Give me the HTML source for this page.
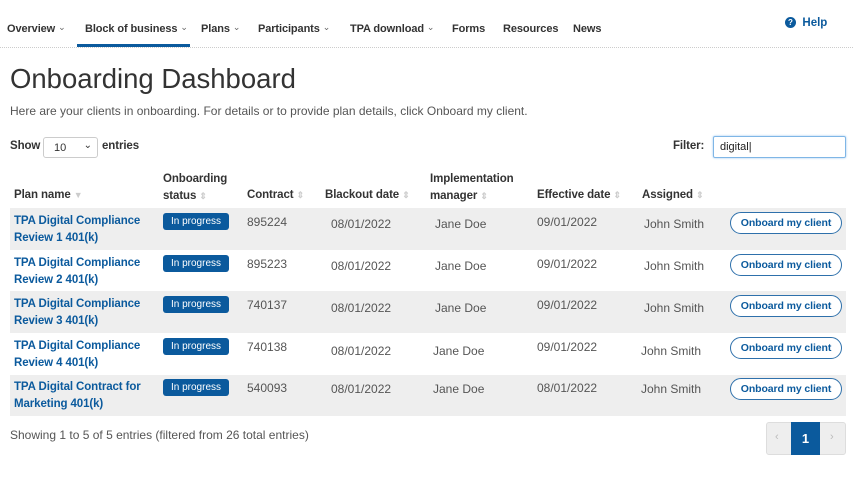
<!DOCTYPE html>
<html><head><meta charset="utf-8"><style>
*{margin:0;padding:0;box-sizing:border-box}
body{width:853px;height:480px;background:#fff;font-family:"Liberation Sans",sans-serif;color:#333;position:relative;overflow:hidden}
.a{position:absolute;white-space:nowrap}
.nav{font-size:11px;font-weight:bold;color:#333;top:23px;letter-spacing:-0.1px}
.car{font-weight:normal;font-size:9px;color:#666;position:relative;top:-2px}
.th{font-size:11.5px;font-weight:bold;color:#333;letter-spacing:-0.1px}
.s{color:#ccc;font-size:9px}
.row{position:absolute;left:10px;width:836px}
.g{background:#eee}
.pn{font-size:11.5px;font-weight:bold;color:#0b5a9d;line-height:17px;letter-spacing:-0.1px}
.badge{background:#0b5a9d;color:#fff;font-size:10px;border-radius:3px;width:66px;height:17px;line-height:17px;text-align:center}
.c{font-size:12px;color:#555}
.btn{border:1px solid #2e70ab;border-radius:12px;width:112px;height:22px;line-height:20px;text-align:center;color:#0b5a9d;font-size:10.5px;font-weight:bold;background:#fff;letter-spacing:-0.1px}
</style></head><body>
<div class="a nav" style="left:7px">Overview <span class="car">&#8964;</span></div>
<div class="a nav" style="left:85px">Block of business <span class="car">&#8964;</span></div>
<div style="position:absolute;left:77px;top:44px;width:113px;height:3px;background:#0b5a9d"></div>
<div class="a nav" style="left:201px">Plans <span class="car">&#8964;</span></div>
<div class="a nav" style="left:258px">Participants <span class="car">&#8964;</span></div>
<div class="a nav" style="left:350px">TPA download <span class="car">&#8964;</span></div>
<div class="a nav" style="left:452px">Forms</div>
<div class="a nav" style="left:503px">Resources</div>
<div class="a nav" style="left:573px">News</div>
<div class="a" style="left:785px;top:17px;font-size:11.5px;font-weight:bold;color:#0b5a9d"><span style="display:inline-block;width:11px;height:11px;border-radius:50%;background:#0b5a9d;color:#fff;font-size:8px;text-align:center;line-height:11px;vertical-align:1px">?</span>&nbsp; Help</div>
<div style="position:absolute;left:0;top:47px;width:853px;border-top:1px dotted #ccc"></div>
<div class="a" style="left:10px;top:63px;font-size:27.5px;color:#333">Onboarding Dashboard</div>
<div class="a" style="left:10px;top:104px;font-size:12px;color:#555">Here are your clients in onboarding. For details or to provide plan details, click Onboard my client.</div>
<div class="a th" style="left:10px;top:140px">Show</div>
<div class="a" style="left:43px;top:137px;width:55px;height:21px;border:1px solid #ccc;border-radius:3px;font-size:11px;padding:4px 10px">10<span style="position:absolute;right:5px;top:2px;font-size:10px">&#8964;</span></div>
<div class="a th" style="left:102px;top:140px">entries</div>
<div class="a th" style="left:673px;top:140px">Filter:</div>
<div class="a" style="left:713px;top:136px;width:133px;height:22px;border:1px solid #7fb6e6;box-shadow:0 0 2px #9cc8f0;border-radius:2px;font-size:11px;padding:4px 6px;color:#222">digital|</div>
<div class="a th" style="left:14px;top:189px">Plan name <span class="s">&#9660;</span></div>
<div class="a th" style="left:163px;top:171px;line-height:17px">Onboarding<br>status <span class="s">&#8661;</span></div>
<div class="a th" style="left:247px;top:189px">Contract <span class="s">&#8661;</span></div>
<div class="a th" style="left:325px;top:189px">Blackout date <span class="s">&#8661;</span></div>
<div class="a th" style="left:430px;top:171px;line-height:17px">Implementation<br>manager <span class="s">&#8661;</span></div>
<div class="a th" style="left:537px;top:189px">Effective date <span class="s">&#8661;</span></div>
<div class="a th" style="left:642px;top:189px">Assigned <span class="s">&#8661;</span></div>

<div class="row g" style="top:208px;height:42px"></div>
<div class="row" style="top:250px;height:41px"></div>
<div class="row g" style="top:291px;height:42px"></div>
<div class="row" style="top:333px;height:42px"></div>
<div class="row g" style="top:375px;height:41px"></div>

<div class="a pn" style="left:14px;top:213px">TPA Digital Compliance<br>Review 1 401(k)</div>
<div class="a badge" style="left:163px;top:213px">In progress</div>
<div class="a c" style="left:247px;top:215px">895224</div>
<div class="a c" style="left:331px;top:217px">08/01/2022</div>
<div class="a c" style="left:435px;top:217px">Jane Doe</div>
<div class="a c" style="left:537px;top:215px">09/01/2022</div>
<div class="a c" style="left:644px;top:217px">John Smith</div>
<div class="a btn" style="left:730px;top:212px">Onboard my client</div>

<div class="a pn" style="left:14px;top:255px">TPA Digital Compliance<br>Review 2 401(k)</div>
<div class="a badge" style="left:163px;top:255px">In progress</div>
<div class="a c" style="left:247px;top:257px">895223</div>
<div class="a c" style="left:331px;top:259px">08/01/2022</div>
<div class="a c" style="left:435px;top:259px">Jane Doe</div>
<div class="a c" style="left:537px;top:257px">09/01/2022</div>
<div class="a c" style="left:644px;top:259px">John Smith</div>
<div class="a btn" style="left:730px;top:254px">Onboard my client</div>

<div class="a pn" style="left:14px;top:296px">TPA Digital Compliance<br>Review 3 401(k)</div>
<div class="a badge" style="left:163px;top:296px">In progress</div>
<div class="a c" style="left:247px;top:298px">740137</div>
<div class="a c" style="left:331px;top:301px">08/01/2022</div>
<div class="a c" style="left:435px;top:301px">Jane Doe</div>
<div class="a c" style="left:537px;top:298px">09/01/2022</div>
<div class="a c" style="left:644px;top:301px">John Smith</div>
<div class="a btn" style="left:730px;top:295px">Onboard my client</div>

<div class="a pn" style="left:14px;top:338px">TPA Digital Compliance<br>Review 4 401(k)</div>
<div class="a badge" style="left:163px;top:338px">In progress</div>
<div class="a c" style="left:247px;top:340px">740138</div>
<div class="a c" style="left:331px;top:344px">08/01/2022</div>
<div class="a c" style="left:433px;top:344px">Jane Doe</div>
<div class="a c" style="left:537px;top:340px">09/01/2022</div>
<div class="a c" style="left:641px;top:344px">John Smith</div>
<div class="a btn" style="left:730px;top:337px">Onboard my client</div>

<div class="a pn" style="left:14px;top:379px">TPA Digital Contract for<br>Marketing 401(k)</div>
<div class="a badge" style="left:163px;top:379px">In progress</div>
<div class="a c" style="left:247px;top:381px">540093</div>
<div class="a c" style="left:331px;top:382px">08/01/2022</div>
<div class="a c" style="left:433px;top:382px">Jane Doe</div>
<div class="a c" style="left:537px;top:381px">08/01/2022</div>
<div class="a c" style="left:641px;top:382px">John Smith</div>
<div class="a btn" style="left:730px;top:378px">Onboard my client</div>

<div class="a" style="left:10px;top:428px;font-size:12px;color:#555">Showing 1 to 5 of 5 entries (filtered from 26 total entries)</div>
<div class="a" style="left:766px;top:422px;width:80px;height:33px;border:1px solid #ddd;border-radius:3px;background:#eee"></div>
<div class="a" style="left:775px;top:431px;color:#bbb;font-size:11px">&#8249;</div>
<div class="a" style="left:791px;top:422px;width:29px;height:33px;background:#0b5a9d;color:#fff;font-weight:bold;font-size:13px;text-align:center;line-height:33px">1</div>
<div class="a" style="left:830px;top:431px;color:#bbb;font-size:11px">&#8250;</div>
</body></html>
